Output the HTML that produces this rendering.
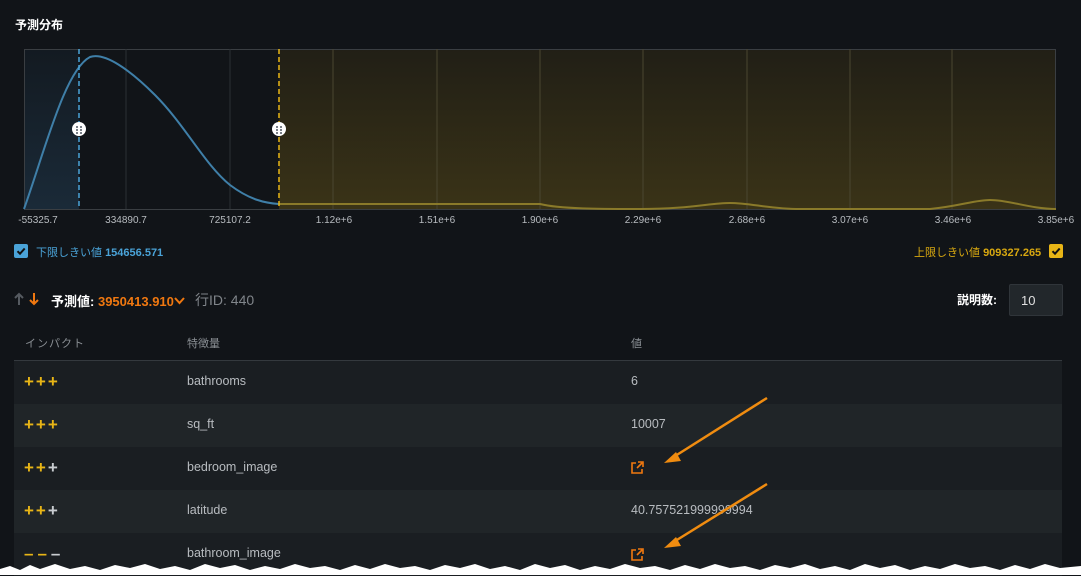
<!DOCTYPE html>
<html><head><meta charset="utf-8"><style>
*{margin:0;padding:0;box-sizing:border-box}
body{width:1081px;height:575px;background:#111418;font-family:"Liberation Sans","Noto Sans CJK JP",sans-serif;color:#c8ccd0;position:relative;overflow:hidden}
.abs{position:absolute}
.t{font-size:12px;color:#fff;font-weight:bold;left:15px;top:16px}
.xl{font-size:10px;color:#b8bcc0;top:215px;transform:translateX(-50%);white-space:nowrap}
.row{position:absolute;left:14px;width:1048px;height:43px}
.cell{position:absolute;font-size:12.5px;color:#b8bcc0;top:13px}
.pl{position:absolute;top:11px;left:10px;font-size:17px;font-weight:bold;letter-spacing:2px;color:#e8b516}
</style></head><body>
<div class="abs t">予測分布</div>
<svg class="abs" style="left:0;top:0" width="1081" height="240">
<defs><linearGradient id="yg" x1="0" y1="0" x2="0" y2="1"><stop offset="0" stop-color="#211f16"/><stop offset="1" stop-color="#3a3317"/></linearGradient>
<linearGradient id="bg" x1="0" y1="0" x2="0" y2="1"><stop offset="0" stop-color="#131a21"/><stop offset="1" stop-color="#1a2a38"/></linearGradient></defs>
<rect x="24" y="49" width="55" height="160" fill="url(#bg)"/>
<rect x="279" y="49" width="777" height="160" fill="url(#yg)"/>
<rect x="24.5" y="49.5" width="1031" height="160" fill="none" stroke="#3a3e42"/>
<g stroke="#2c3034"><line x1="126" y1="49" x2="126" y2="209"/><line x1="230" y1="49" x2="230" y2="209"/></g>
<g stroke="#4a4630"><line x1="333" y1="49" x2="333" y2="209"/><line x1="437" y1="49" x2="437" y2="209"/><line x1="540" y1="49" x2="540" y2="209"/><line x1="643" y1="49" x2="643" y2="209"/><line x1="747" y1="49" x2="747" y2="209"/><line x1="850" y1="49" x2="850" y2="209"/><line x1="952" y1="49" x2="952" y2="209"/></g>
<path d="M24 209 C45 150,65 70,90 57 C105 52,130 70,155 95 C185 125,205 165,230 185 C250 200,265 203,279 204" fill="none" stroke="#3f7fa8" stroke-width="2"/>
<path d="M279 204 L540 204 C560 209,600 209,640 209 C690 209,710 203,730 203 C750 203,770 209,800 209 L930 209 C960 206,975 200,990 200 C1010 200,1030 209,1056 209" fill="none" stroke="#8a7a2a" stroke-width="2"/>
<line x1="79" y1="49" x2="79" y2="209" stroke="#4aa3d8" stroke-width="1.5" stroke-dasharray="5,3"/>
<line x1="279" y1="49" x2="279" y2="209" stroke="#e8b516" stroke-width="1.5" stroke-dasharray="5,3"/>
<circle cx="79" cy="129" r="7" fill="#fff"/><circle cx="279" cy="129" r="7" fill="#fff"/>
<g fill="#7a8088"><rect x="76" y="126" width="2" height="2"/><rect x="80" y="126" width="2" height="2"/><rect x="76" y="129" width="2" height="2"/><rect x="80" y="129" width="2" height="2"/><rect x="76" y="132" width="2" height="2"/><rect x="80" y="132" width="2" height="2"/>
<rect x="276" y="126" width="2" height="2"/><rect x="280" y="126" width="2" height="2"/><rect x="276" y="129" width="2" height="2"/><rect x="280" y="129" width="2" height="2"/><rect x="276" y="132" width="2" height="2"/><rect x="280" y="132" width="2" height="2"/></g>
</svg>
<div class="abs xl" style="left:38px">-55325.7</div>
<div class="abs xl" style="left:126px">334890.7</div>
<div class="abs xl" style="left:230px">725107.2</div>
<div class="abs xl" style="left:334px">1.12e+6</div>
<div class="abs xl" style="left:437px">1.51e+6</div>
<div class="abs xl" style="left:540px">1.90e+6</div>
<div class="abs xl" style="left:643px">2.29e+6</div>
<div class="abs xl" style="left:747px">2.68e+6</div>
<div class="abs xl" style="left:850px">3.07e+6</div>
<div class="abs xl" style="left:953px">3.46e+6</div>
<div class="abs xl" style="left:1056px">3.85e+6</div>
<svg class="abs" style="left:14px;top:244px" width="14" height="14"><rect width="14" height="14" rx="2" fill="#4aa3d8"/><path d="M3.5 7.2 L6 9.7 L10.7 4.5" fill="none" stroke="#111" stroke-width="2"/></svg>
<div class="abs" style="left:36px;top:244px;font-size:11px;color:#4aa3d8">下限しきい値 <b>154656.571</b></div>
<div class="abs" style="left:914px;top:244px;font-size:11px;color:#d8a810">上限しきい値 <b>909327.265</b></div>
<svg class="abs" style="left:1049px;top:244px" width="14" height="14"><rect width="14" height="14" rx="2" fill="#e8b516"/><path d="M3.5 7.2 L6 9.7 L10.7 4.5" fill="none" stroke="#111" stroke-width="2"/></svg>
<svg class="abs" style="left:14px;top:292px" width="28" height="14"><path d="M5 13 V2 M1 6 L5 2 L9 6" fill="none" stroke="#555a60" stroke-width="2"/><path d="M20 1 V12 M16 8 L20 12 L24 8" fill="none" stroke="#f07810" stroke-width="2"/></svg>
<div class="abs" style="left:51px;top:291px;font-size:13px;white-space:nowrap"><b style="color:#fff">予測値:</b> <b style="color:#f07810">3950413.910</b></div>
<svg class="abs" style="left:174px;top:297px" width="11" height="8"><path d="M1 1 L5.5 6 L10 1" fill="none" stroke="#f07810" stroke-width="2"/></svg>
<div class="abs" style="left:195px;top:290px;font-size:14px;color:#80858a">行ID: 440</div>
<div class="abs" style="left:957px;top:291px;font-size:12px;color:#fff;font-weight:bold">説明数:</div>
<div class="abs" style="left:1009px;top:284px;width:54px;height:32px;background:#22272b;border:1px solid #30353a;border-radius:2px;font-size:13px;color:#e0e0e0;padding:8px 0 0 11px">10</div>
<div class="abs" style="left:25px;top:335px;font-size:11px;color:#8a8f94;letter-spacing:1px">インパクト</div>
<div class="abs" style="left:187px;top:335px;font-size:11px;color:#8a8f94">特徴量</div>
<div class="abs" style="left:631px;top:335px;font-size:11px;color:#8a8f94">値</div>
<div class="abs" style="left:14px;top:360px;width:1048px;height:1px;background:#34393e"></div>
<div class="row" style="top:361px;background:#1a1e22"><div class="pl">+++</div><div class="cell" style="left:173px">bathrooms</div><div class="cell" style="left:617px">6</div></div>
<div class="row" style="top:404px;background:#202528"><div class="pl">+++</div><div class="cell" style="left:173px">sq_ft</div><div class="cell" style="left:617px">10007</div></div>
<div class="row" style="top:447px;background:#1a1e22"><div class="pl">++<span style="color:#c8ccd0">+</span></div><div class="cell" style="left:173px">bedroom_image</div></div>
<div class="row" style="top:490px;background:#202528"><div class="pl">++<span style="color:#c8ccd0">+</span></div><div class="cell" style="left:173px">latitude</div><div class="cell" style="left:617px">40.757521999999994</div></div>
<div class="row" style="top:533px;background:#1a1e22"><div class="pl" style="letter-spacing:4px">––<span style="color:#c8ccd0">–</span></div><div class="cell" style="left:173px">bathroom_image</div></div>
<svg class="abs" style="left:0;top:0" width="1081" height="575">
<g fill="none" stroke="#f07810" stroke-width="1.6"><path d="M636 463 H632 V473 H642 V469 M637 468 L642 463 M638 462 H643 V467"/><path d="M636 550 H632 V560 H642 V556 M637 555 L642 550 M638 549 H643 V554"/></g>
<g stroke="#f08c10" stroke-width="2.5"><line x1="767" y1="398" x2="672" y2="458"/><line x1="767" y1="484" x2="672" y2="543"/></g>
<g fill="#f08c10"><polygon points="664,463 676,452 681,461"/><polygon points="664,548 676,537 681,546"/></g>
<polygon fill="#fff" points="0,575 0,569 10,566 20,570 30,565 40,569 55,564 70,569 85,566 100,570 115,565 130,568 145,564 160,569 175,566 190,570 205,564 220,568 235,565 250,570 265,566 280,569 295,564 310,568 325,566 340,570 355,565 370,569 385,564 400,568 415,566 430,570 445,565 460,568 475,564 490,569 505,566 520,570 535,564 550,568 565,565 580,570 595,566 610,569 625,564 640,568 655,566 670,570 685,565 700,569 715,564 730,568 745,566 760,570 775,565 790,568 805,564 820,569 835,566 850,570 865,564 880,568 895,565 910,570 925,566 940,569 955,564 970,568 985,566 1000,570 1015,565 1030,569 1045,564 1060,568 1081,566 1081,575"/>
</svg>
</body></html>
